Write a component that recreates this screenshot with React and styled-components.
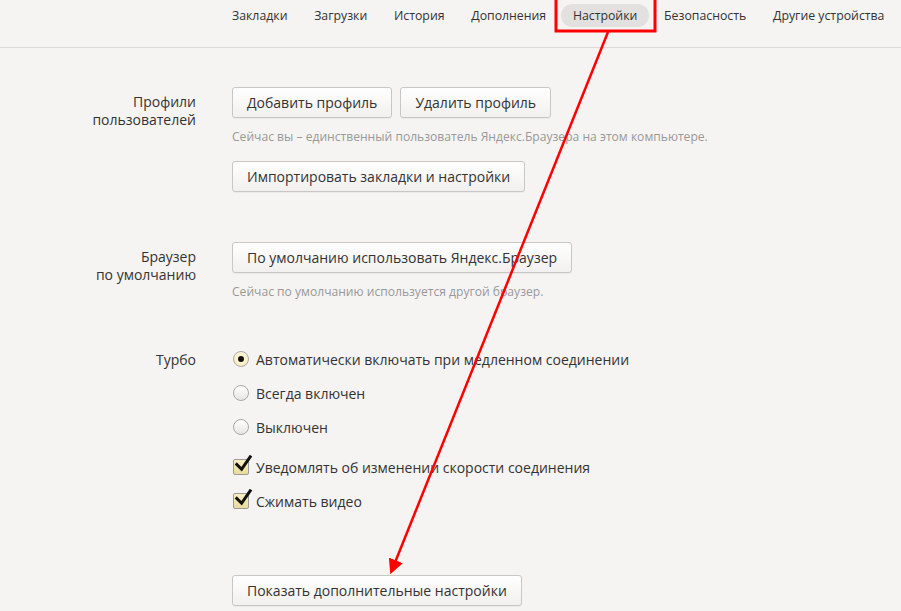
import React from 'react';
import styled, { createGlobalStyle } from 'styled-components';

const tabs = ['Закладки', 'Загрузки', 'История', 'Дополнения', 'Настройки', 'Безопасность', 'Другие устройства'];

const turbo = [
    { label: 'Автоматически включать при медленном соединении', checked: true },
    { label: 'Всегда включен', checked: false },
    { label: 'Выключен', checked: false }
];

const Radio = ({ checked, children }) => (
    <OptionRow>
        <RadioMark checked={checked} />
        <OptionText>{children}</OptionText>
    </OptionRow>
);

const Check = ({ children }) => (
    <OptionRow>
        <CheckBox>
            <CheckTick viewBox="0 0 20 20">
                <path d="M3 10 L8 15 L17 2" />
            </CheckTick>
        </CheckBox>
        <OptionText>{children}</OptionText>
    </OptionRow>
);

const App = () => (
    <Page>
        <GlobalStyle />
        <Header>
            <Nav>
                {tabs.map(tab => (
                    <Tab key={tab} active={tab === 'Настройки'}>{tab}</Tab>
                ))}
            </Nav>
        </Header>
        <Main>
            <Section>
                <Label>Профили<br />пользователей</Label>
                <Content>
                    <ButtonRow>
                        <Button>Добавить профиль</Button>
                        <Button>Удалить профиль</Button>
                    </ButtonRow>
                    <Hint>Сейчас вы – единственный пользователь Яндекс.Браузера на этом компьютере.</Hint>
                    <ButtonRow top="16px">
                        <Button>Импортировать закладки и настройки</Button>
                    </ButtonRow>
                </Content>
            </Section>
            <Section>
                <Label>Браузер<br />по умолчанию</Label>
                <Content>
                    <ButtonRow>
                        <Button>По умолчанию использовать Яндекс.Браузер</Button>
                    </ButtonRow>
                    <Hint>Сейчас по умолчанию используется другой браузер.</Hint>
                </Content>
            </Section>
            <Section>
                <Label top="1px">Турбо</Label>
                <Content>
                    <Options>
                        {turbo.map(o => (
                            <Radio key={o.label} checked={o.checked}>{o.label}</Radio>
                        ))}
                    </Options>
                    <Options spaced>
                        <Check>Уведомлять об изменении скорости соединения</Check>
                        <Check>Сжимать видео</Check>
                    </Options>
                </Content>
            </Section>
            <Section last>
                <span />
                <Content>
                    <ButtonRow>
                        <Button>Показать дополнительные настройки</Button>
                    </ButtonRow>
                </Content>
            </Section>
        </Main>
        <Annotation viewBox="0 0 901 611">
            <defs>
                <marker id="head" markerWidth="6" markerHeight="6" refX="2" refY="3" orient="auto" markerUnits="strokeWidth">
                    <path d="M0 0 L6 3 L0 6 Z" fill="#ff0000" />
                </marker>
            </defs>
            <rect x="556" y="-2" width="99" height="33" fill="none" stroke="#ff0000" strokeWidth="3" />
            <line x1="608" y1="32" x2="394" y2="565" stroke="#ff0000" strokeWidth="2.5" markerEnd="url(#head)" />
        </Annotation>
    </Page>
);

export default App;

const GlobalStyle = createGlobalStyle`
    html, body {
        margin: 0;
        padding: 0;
        background: #f5f4f2;
    }

    body {
        font-family: "Open Sans", "Noto Sans", sans-serif;
        color: #333;
        overflow: hidden;
    }
`;

const Page = styled.div`
    position: relative;
    width: 901px;
    height: 611px;
    overflow: hidden;
`;

const Header = styled.header`
    height: 47px;
    border-bottom: 1px solid #dcdbd9;
`;

const Nav = styled.nav`
    display: flex;
    gap: 2.7px;
    padding: 4px 0 0 220px;
`;

const Tab = styled.div`
    height: 23px;
    line-height: 23px;
    padding: 0 12px;
    font-size: 12.3px;
    color: #333;
    white-space: nowrap;
    border-radius: 12px;
    background: ${props => props.active ? '#e2e1df' : 'transparent'};
`;

const Main = styled.main`
    padding-top: 39px;
`;

const Section = styled.section`
    display: grid;
    grid-template-columns: 196px 1fr;
    column-gap: 36px;
    margin-top: ${props => props.last ? '65px' : '0'};
    margin-bottom: 50px;
`;

const Label = styled.div`
    text-align: right;
    font-size: 14px;
    line-height: 18px;
    color: #333;
    padding-top: ${props => props.top || '6px'};
`;

const Content = styled.div`
    display: flex;
    flex-direction: column;
    align-items: flex-start;
`;

const ButtonRow = styled.div`
    display: flex;
    gap: 8px;
    margin-top: ${props => props.top || '0'};
`;

const Button = styled.button`
    height: 31px;
    padding: 0 14px;
    font-family: "Open Sans", "Noto Sans", sans-serif;
    font-size: 14px;
    color: #333;
    border: 1px solid #c8c7c5;
    border-radius: 3px;
    background: linear-gradient(#ffffff, #f1f0ee);
    box-shadow: 0 1px 0 rgba(0, 0, 0, 0.04);
`;

const Hint = styled.div`
    font-size: 12.1px;
    line-height: 16px;
    color: #999;
    margin-top: 11px;
`;

const Options = styled.div`
    display: flex;
    flex-direction: column;
    gap: 16px;
    margin-top: ${props => props.spaced ? '22px' : '0'};
`;

const OptionRow = styled.label`
    display: flex;
    align-items: center;
    gap: 7px;
    height: 18px;
    font-size: 14px;
    color: #333;
`;

const OptionText = styled.span`
    white-space: nowrap;
`;

const RadioMark = styled.span`
    position: relative;
    width: 14px;
    height: 14px;
    margin-left: 1px;
    border-radius: 50%;
    border: 1px solid #aaa9a6;
    background: ${props => props.checked
        ? 'radial-gradient(circle, #fdf5cf 40%, #efe2a8)'
        : 'linear-gradient(#ffffff, #e6e5e3)'};
    box-shadow: inset 0 1px 1px rgba(255, 255, 255, 0.8);

    &::after {
        content: '';
        display: ${props => props.checked ? 'block' : 'none'};
        position: absolute;
        left: 4px;
        top: 4px;
        width: 6px;
        height: 6px;
        border-radius: 50%;
        background: #111;
    }
`;

const CheckBox = styled.span`
    position: relative;
    width: 14px;
    height: 14px;
    margin-left: 1px;
    border: 1px solid #9c9a94;
    border-radius: 2px;
    background: linear-gradient(#f8efc4, #eadb9c);
`;

const CheckTick = styled.svg`
    position: absolute;
    left: 0;
    top: -5px;
    width: 19px;
    height: 19px;

    path {
        fill: none;
        stroke: #111;
        stroke-width: 3.2;
        stroke-linecap: square;
    }
`;

const Annotation = styled.svg`
    position: absolute;
    left: 0;
    top: 0;
    width: 901px;
    height: 611px;
    pointer-events: none;
`;
